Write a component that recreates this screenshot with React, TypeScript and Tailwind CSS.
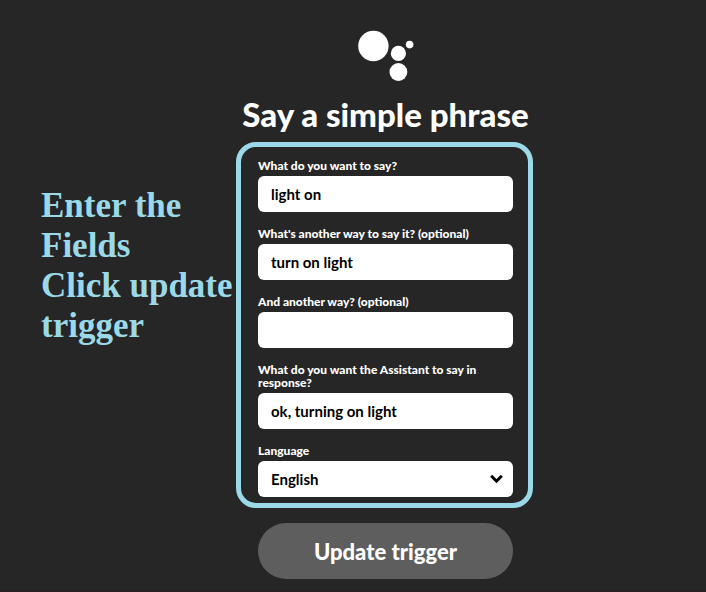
import type { ReactNode } from "react";
import { useState } from "react";

const fieldClass =
  "block h-9 w-full rounded-[6px] bg-white px-[13px] text-[15px] font-bold text-black outline-none";

function Field({ id, label, children }: { id: string; label: string; children: ReactNode }) {
  return (
    <div className="flex flex-col gap-1">
      <label htmlFor={id} className="text-[12px] leading-[13px] font-black text-white">
        {label}
      </label>
      {children}
    </div>
  );
}

function TextField({ id, label, initial }: { id: string; label: string; initial: string }) {
  const [value, setValue] = useState(initial);
  return (
    <Field id={id} label={label}>
      <input id={id} type="text" value={value} onChange={(e) => setValue(e.target.value)} className={fieldClass} />
    </Field>
  );
}

function AssistantLogo() {
  return (
    <svg width="56" height="52" viewBox="0 0 56 52" fill="white" aria-hidden="true">
      <circle cx="15.4" cy="16" r="15.2" />
      <circle cx="40.4" cy="23.4" r="7.6" />
      <circle cx="51.6" cy="14.6" r="3.8" />
      <circle cx="40.4" cy="42" r="8.9" />
    </svg>
  );
}

export default function App() {
  return (
    <div className="flex min-h-screen items-start border-b-2 border-[#2a2127] bg-[#262626] pl-[41px] font-['Lato',sans-serif]">
      <aside className="w-[195px] shrink-0 pt-[186px] font-['Liberation_Serif',serif] text-[35px] leading-[40px] font-bold text-[#9bd9e8]">
        <p>Enter the Fields</p>
        <p className="whitespace-nowrap">Click update</p>
        <p>trigger</p>
      </aside>
      <main className="w-[297px] shrink-0 pt-[30px]">
        <header className="flex flex-col items-center pl-[2px]">
          <AssistantLogo />
          <h1 className="mt-3 text-[33px] leading-[40px] font-black whitespace-nowrap text-white">
            Say a simple phrase
          </h1>
        </header>
        <form onSubmit={(e) => e.preventDefault()}>
          <div className="mt-2 flex flex-col gap-[15px] rounded-[20px] border-5 border-[#9bd9e8] pt-3 pr-[15px] pb-[6px] pl-[17px]">
            <TextField id="phrase" label="What do you want to say?" initial="light on" />
            <TextField id="phrase-two" label="What's another way to say it? (optional)" initial="turn on light" />
            <TextField id="phrase-three" label="And another way? (optional)" initial="" />
            <TextField
              id="response"
              label="What do you want the Assistant to say in response?"
              initial="ok, turning on light"
            />
            <Field id="language" label="Language">
              <div className="relative">
                <select id="language" className={`${fieldClass} appearance-none`}>
                  <option>English</option>
                </select>
                <svg
                  className="pointer-events-none absolute top-[13px] right-[10px]"
                  width="13"
                  height="11"
                  viewBox="0 0 13 11"
                  fill="none"
                  stroke="black"
                  strokeWidth="3"
                  aria-hidden="true"
                >
                  <path d="M1.2 1.8 6.5 7.2 11.8 1.8" />
                </svg>
              </div>
            </Field>
          </div>
          <div className="pt-[15px] pr-5 pl-[22px]">
            <button type="submit" className="h-14 w-full rounded-full bg-[#5e5e5e] text-[22px] font-black text-white">
              Update trigger
            </button>
          </div>
        </form>
      </main>
    </div>
  );
}
